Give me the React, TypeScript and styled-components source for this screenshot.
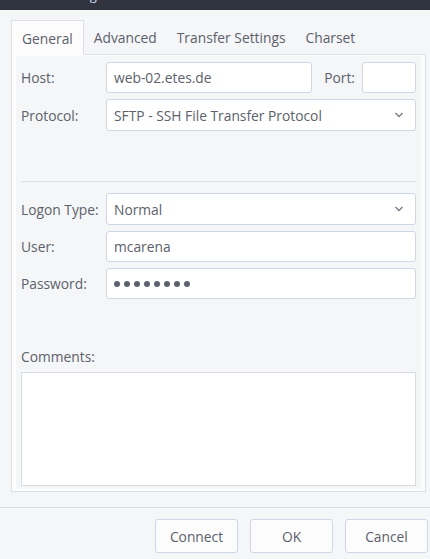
import React from "react";
import styled, { createGlobalStyle } from "styled-components";

const GlobalStyle = createGlobalStyle`
  html, body {
    margin: 0;
    padding: 0;
    background: #f5f6f7;
  }
  * {
    box-sizing: border-box;
  }
`;

const Window = styled.div`
  width: 430px;
  height: 559px;
  display: flex;
  flex-direction: column;
  background: #f5f6f7;
  color: #5c616c;
  font-family: "Open Sans", "Noto Sans", sans-serif;
  font-size: 13.8px;
  overflow: hidden;
`;

const TitleBar = styled.div`
  height: 10px;
  flex: none;
  background: #2f343f;
  color: #cfdae7;
  overflow: hidden;
  padding-left: 30px;
  font-size: 13px;
  line-height: 13px;
`;

const TitleText = styled.div`
  margin-top: -11px;
`;

const Body = styled.div`
  display: flex;
  flex-direction: column;
  padding: 10px 4px 0 11px;
`;

const TabBar = styled.div`
  display: flex;
  height: 34px;
  align-items: stretch;
`;

const Tab = styled.div<{ active?: boolean }>`
  display: flex;
  align-items: center;
  padding: 0 ${({ active }) => (active ? "10px" : "10px")};
  border: ${({ active }) => (active ? "1px solid #dcdfe3" : "none")};
  border-bottom: none;
  background: ${({ active }) => (active ? "#fcfcfd" : "transparent")};
  margin-bottom: ${({ active }) => (active ? "-1px" : "0")};
  position: relative;
  z-index: 1;
  white-space: nowrap;
`;

const Pane = styled.div`
  height: 438px;
  border: 1px solid #dcdfe3;
  background: #fcfcfd;
  padding: 1px 4px 2px 4px;
  display: flex;
`;

const Content = styled.div`
  flex: 1;
  background: #f5f6f7;
  padding: 6px 5px 3px 5px;
  display: flex;
  flex-direction: column;
`;

const FormRow = styled.div<{ gap?: number }>`
  display: grid;
  grid-template-columns: 80px 1fr;
  column-gap: 5px;
  align-items: center;
  margin-top: ${({ gap = 0 }) => gap}px;
`;

const Label = styled.div`
  white-space: nowrap;
`;

const Field = styled.div<{ h?: number; grow?: boolean }>`
  height: ${({ h = 31 }) => h}px;
  flex: ${({ grow }) => (grow ? 1 : "none")};
  border: 1px solid #cfd6e6;
  border-radius: 3px;
  background: #ffffff;
  display: flex;
  align-items: center;
  padding: 0 7px;
  min-width: 0;
  white-space: nowrap;
`;

const HostLine = styled.div`
  display: flex;
  align-items: center;
`;

const PortLabel = styled.div`
  margin: 0 7px 0 12px;
`;

const PortField = styled(Field)`
  width: 54px;
`;

const Select = styled(Field)`
  justify-content: space-between;
  padding-right: 11px;
`;

const Chevron = () => (
  <svg width="10" height="6" viewBox="0 0 10 6">
    <path d="M1.5 1 L5 4.5 L8.5 1" fill="none" stroke="#7c818c" strokeWidth="1.5" />
  </svg>
);

const Separator = styled.div`
  height: 1px;
  background: #dcdfe3;
  margin: 50px 0 11px 0;
`;

const Dots = styled.div`
  display: flex;
  gap: 4px;
`;

const Dot = styled.span`
  width: 6px;
  height: 6px;
  border-radius: 50%;
  background: #5c616c;
`;

const CommentsLabel = styled.div`
  margin-top: 49px;
  line-height: 18px;
`;

const TextArea = styled.div`
  flex: 1;
  margin-top: 6px;
  background: #ffffff;
  border: 1px solid #d8dbdf;
`;

const ButtonBar = styled.div`
  margin: 15px -4px 0 -11px;
  border-top: 1px solid #dcdfe3;
  padding: 11px 2px 7px 0;
  display: flex;
  justify-content: flex-end;
  gap: 12px;
`;

const Button = styled.div`
  width: 83px;
  height: 34px;
  border: 1px solid #cfd6e6;
  border-radius: 3px;
  background: #fcfcfd;
  display: flex;
  align-items: center;
  justify-content: center;
`;

export default function App() {
  return (
    <>
      <GlobalStyle />
      <Window>
        <TitleBar>
          <TitleText>Site Manager</TitleText>
        </TitleBar>
        <Body>
          <TabBar>
            <Tab active>General</Tab>
            <Tab>Advanced</Tab>
            <Tab>Transfer Settings</Tab>
            <Tab>Charset</Tab>
          </TabBar>
          <Pane>
            <Content>
              <FormRow>
                <Label>Host:</Label>
                <HostLine>
                  <Field grow>web-02.etes.de</Field>
                  <PortLabel>Port:</PortLabel>
                  <PortField />
                </HostLine>
              </FormRow>
              <FormRow gap={6}>
                <Label>Protocol:</Label>
                <Select h={32}>
                  <span>SFTP - SSH File Transfer Protocol</span>
                  <Chevron />
                </Select>
              </FormRow>
              <Separator />
              <FormRow>
                <Label>Logon Type:</Label>
                <Select h={32}>
                  <span>Normal</span>
                  <Chevron />
                </Select>
              </FormRow>
              <FormRow gap={6}>
                <Label>User:</Label>
                <Field>mcarena</Field>
              </FormRow>
              <FormRow gap={6}>
                <Label>Password:</Label>
                <Field>
                  <Dots>
                    {Array.from({ length: 8 }).map((_, i) => (
                      <Dot key={i} />
                    ))}
                  </Dots>
                </Field>
              </FormRow>
              <CommentsLabel>Comments:</CommentsLabel>
              <TextArea />
            </Content>
          </Pane>
          <ButtonBar>
            <Button>Connect</Button>
            <Button>OK</Button>
            <Button>Cancel</Button>
          </ButtonBar>
        </Body>
      </Window>
    </>
  );
}
